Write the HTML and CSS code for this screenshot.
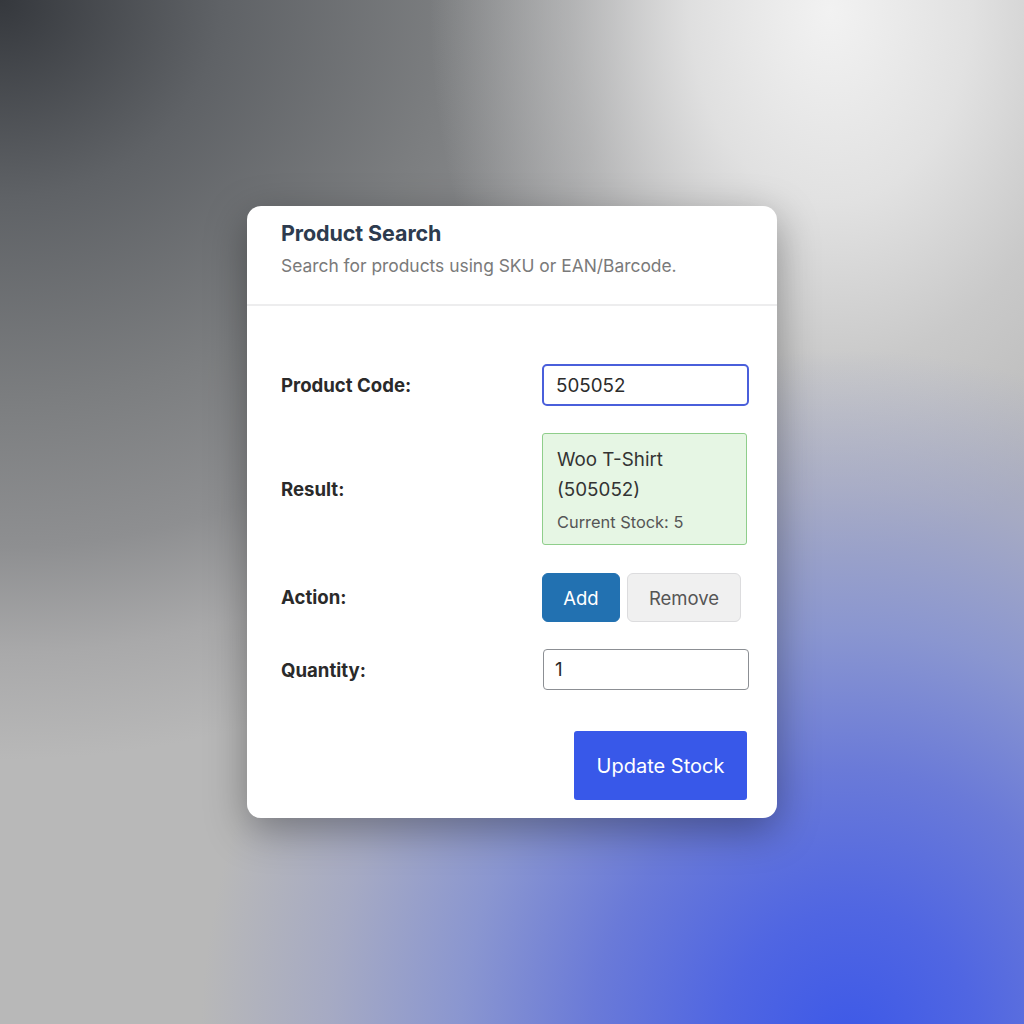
FILE: index.html
```html
<!DOCTYPE html>
<html>
<head>
<meta charset="utf-8">
<link rel="stylesheet" href="styles.css">
</head>
<body>
<div class="stage">
  <div class="card">
    <div class="card-header">
      <h2 class="title">Product Search</h2>
      <p class="subtitle">Search for products using SKU or EAN/Barcode.</p>
    </div>
    <div class="card-body">
      <div class="form">
        <label class="label">Product Code:</label>
        <div class="field"><div class="input input-focus">505052</div></div>

        <label class="label">Result:</label>
        <div class="field">
          <div class="result">
            <div class="result-name">Woo T-Shirt<br>(505052)</div>
            <div class="result-stock">Current Stock: 5</div>
          </div>
        </div>

        <label class="label">Action:</label>
        <div class="field actions">
          <button class="btn btn-add">Add</button>
          <button class="btn btn-remove">Remove</button>
        </div>

        <label class="label">Quantity:</label>
        <div class="field"><div class="input input-qty">1</div></div>
      </div>
      <div class="footer">
        <button class="btn-update">Update Stock</button>
      </div>
    </div>
  </div>
</div>
</body>
</html>
```

FILE: styles.css
```css
html, body {
  margin: 0;
  padding: 0;
  width: 1024px;
  height: 1024px;
  overflow: hidden;
}
body {
  font-family: Inter, "Liberation Sans", Arial, sans-serif;
  background:
    radial-gradient(ellipse 650px 700px at 850px 1050px,
      rgb(60,88,232) 0%,
      rgb(80,102,226) 20%,
      rgb(106,122,216) 40%,
      rgb(138,150,208) 60%,
      rgba(150,158,205,0.55) 80%,
      rgba(184,184,184,0) 100%),
    radial-gradient(ellipse 400px 550px at 830px 10px,
      rgba(242,242,242,1) 0%,
      rgba(230,230,230,0.9) 35%,
      rgba(218,218,218,0.5) 65%,
      rgba(205,205,205,0) 100%),
    radial-gradient(ellipse 850px 760px at 0px 0px,
      #35383d 0%,
      #5f6266 26%,
      #7c7e80 53%,
      #8e8f91 72%,
      #a9a9aa 86%,
      #b8b8b8 100%),
    #b8b8b8;
}
.stage {
  width: 1024px;
  height: 1024px;
  display: flex;
  align-items: center;
  justify-content: center;
}
.card {
  width: 530px;
  background: #fff;
  border-radius: 14px;
  box-shadow: 0 12px 40px rgba(0,0,0,0.35);
  overflow: hidden;
}
.card-header {
  padding: 14px 34px 27px;
  border-bottom: 2px solid #ededee;
}
.title {
  margin: 0;
  font-size: 21.5px;
  font-weight: 700;
  color: #2d3b4e;
  line-height: 26px;
  letter-spacing: -0.1px;
}
.subtitle {
  margin: 9px 0 0;
  font-size: 17.4px;
  color: #7a7a7a;
  line-height: 22px;
}
.card-body {
  padding: 58px 28px 18px 34px;
}
.form {
  display: grid;
  grid-template-columns: 261px 1fr;
  row-gap: 27px;
  align-items: center;
}
.label {
  font-size: 18.6px;
  font-weight: 700;
  color: #2a2a2a;
}
.field {
  display: flex;
}
.input {
  box-sizing: border-box;
  width: 207px;
  height: 42px;
  border-radius: 5px;
  padding: 0 12px;
  display: flex;
  align-items: center;
  font-size: 18.8px;
  color: #2c2c2c;
}
.input-focus {
  border: 2px solid #4a5fdb;
}
.input-qty {
  width: 206px;
  height: 41px;
  border: 1px solid #8c8f94;
  border-radius: 4px;
  padding: 0 11px;
  margin-left: 1px;
}
.result {
  box-sizing: border-box;
  width: 205px;
  height: 112px;
  background: #e6f6e4;
  border: 1px solid #8fce8b;
  border-radius: 3px;
  padding: 11px 14px;
}
.result-name {
  font-size: 18.8px;
  line-height: 30px;
  color: #333;
}
.result-stock {
  margin-top: 6px;
  font-size: 16.4px;
  color: #555;
  line-height: 22px;
}
.actions {
  gap: 7px;
  margin-top: 1px;
}
.btn {
  box-sizing: border-box;
  height: 49px;
  border-radius: 6px;
  font-family: inherit;
  font-size: 18.5px;
  padding: 0;
  cursor: pointer;
}
.btn-add {
  width: 78px;
  background: #2271b1;
  border: 1px solid #2271b1;
  color: #fff;
}
.btn-remove {
  width: 114px;
  background: #f0f0f0;
  border: 1px solid #dcdcde;
  color: #555;
}
.footer {
  display: flex;
  justify-content: flex-end;
  margin-top: 41px;
  padding-right: 2px;
}
.btn-update {
  width: 173px;
  height: 69px;
  background: #3858e9;
  border: none;
  border-radius: 3px;
  color: #fff;
  font-family: inherit;
  font-size: 20px;
  padding: 0;
}
```
